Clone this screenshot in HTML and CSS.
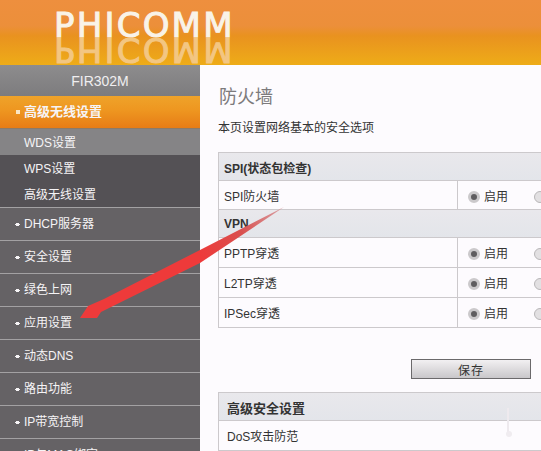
FILE: index.html
```html
<!DOCTYPE html>
<html>
<head>
    <title>PHICOMM FIR302M - 防火墙</title>
    <meta charset="UTF-8">
    <link rel="stylesheet" href="styles.css">
</head>
<body>
    <header class="header">
        <div class="logo">PHICOMM</div>
        <div class="logo logo-mirror" aria-hidden="true">PHICOMM</div>
    </header>

    <div class="main">
        <nav class="sidebar">
            <div class="model">FIR302M</div>
            <a class="menu active" href="#">高级无线设置</a>
            <div class="submenu">
                <a class="sub current" href="#">WDS设置</a>
                <a class="sub" href="#">WPS设置</a>
                <a class="sub" href="#">高级无线设置</a>
            </div>
            <a class="menu" href="#">DHCP服务器</a>
            <a class="menu" href="#">安全设置</a>
            <a class="menu" href="#">绿色上网</a>
            <a class="menu" href="#">应用设置</a>
            <a class="menu" href="#">动态DNS</a>
            <a class="menu" href="#">路由功能</a>
            <a class="menu" href="#">IP带宽控制</a>
            <a class="menu" href="#">IP与MAC绑定</a>
        </nav>

        <div class="content">
            <h2>防火墙</h2>
            <p class="intro">本页设置网络基本的安全选项</p>

            <table class="settings">
                <tr class="head"><th colspan="2">SPI(状态包检查)</th></tr>
                <tr class="short">
                    <td class="name">SPI防火墙</td>
                    <td class="opts"><span class="radio on"></span><span class="opt">启用</span><span class="radio"></span></td>
                </tr>
                <tr class="head"><th colspan="2">VPN</th></tr>
                <tr>
                    <td class="name">PPTP穿透</td>
                    <td class="opts"><span class="radio on"></span><span class="opt">启用</span><span class="radio"></span></td>
                </tr>
                <tr>
                    <td class="name">L2TP穿透</td>
                    <td class="opts"><span class="radio on"></span><span class="opt">启用</span><span class="radio"></span></td>
                </tr>
                <tr>
                    <td class="name">IPSec穿透</td>
                    <td class="opts"><span class="radio on"></span><span class="opt">启用</span><span class="radio"></span></td>
                </tr>
            </table>

            <div class="actions">
                <button class="save" type="button">保存</button>
            </div>

            <table class="settings">
                <tr class="head"><th class="big" colspan="2">高级安全设置</th></tr>
                <tr>
                    <td class="name dos" colspan="2">DoS攻击防范</td>
                </tr>
            </table>
        </div>
    </div>

    <!-- red arrow drawn over the screenshot -->
    <svg class="arrow" width="541" height="451" viewBox="0 0 541 451">
        <defs>
            <linearGradient id="arrowFade" x1="283" y1="208" x2="200" y2="255" gradientUnits="userSpaceOnUse">
                <stop offset="0" stop-color="#d9a0a4"/>
                <stop offset="0.5" stop-color="#d9504f"/>
                <stop offset="1" stop-color="#ee3a3a"/>
            </linearGradient>
        </defs>
        <path d="M284 207 L200 250 L104 299 L88 306 L80 318 L97 318 L101 312 L200 263 Z" fill="url(#arrowFade)"/>
        <path d="M508 408 L508 436" stroke="#eeeaee" stroke-width="2" fill="none"/>
        <circle cx="509" cy="434" r="3" fill="#f0ecf0"/>
    </svg>
</body>
</html>
```

FILE: styles.css
```css
/* CSS styles */
html, body {
    height: 100%;
}

body {
    margin: 0;
    overflow: hidden;
    position: relative;
    font-family: "Liberation Sans", "Noto Sans CJK SC", sans-serif;
    font-size: 12px;
    color: #333;
    background-color: #fdfbfe;
}

.header {
    position: relative;
    height: 65px;
    overflow: hidden;
    box-sizing: border-box;
    padding: 12px 0 0 54px;
    background: linear-gradient(#ee8f3e, #ec8f3a 40%, #e9921f 55%, #eeac18 100%);
}

.logo {
    font-family: "DejaVu Sans", sans-serif;
    font-size: 34px;
    line-height: 26px;
    letter-spacing: 2.2px;
    color: #f9f3e8;
    -webkit-text-stroke: 1px #f9f3e8;
}

.logo-mirror {
    position: absolute;
    left: 54px;
    top: 37px;
    color: #f3c682;
    -webkit-text-stroke: 1px #f3c682;
    transform: scaleY(-1);
}

.main {
    display: flex;
}

/* left menu */
.sidebar {
    width: 200px;
    flex-shrink: 0;
    background-color: #656265;
    color: #fff;
}

.sidebar a {
    display: block;
    color: #f6f4f6;
    text-decoration: none;
}

.model {
    height: 31px;
    line-height: 33px;
    text-align: center;
    font-size: 14px;
    color: #f0eef0;
    background: linear-gradient(#8d8c8d, #7d7c7e);
}

.menu {
    position: relative;
    height: 32px;
    line-height: 33px;
    padding-left: 24px;
    border-bottom: 1px solid #a3a1a3;
}

/* small plus in front of each item */
.menu::before {
    content: "";
    position: absolute;
    left: 15px;
    top: 14px;
    width: 5px;
    height: 5px;
    background:
        linear-gradient(#f6f4f6, #f6f4f6) center / 5px 1px no-repeat,
        linear-gradient(#f6f4f6, #f6f4f6) center / 3px 3px no-repeat;
}

.menu.active {
    line-height: 31px;
    font-size: 13px;
    font-weight: bold;
    background: linear-gradient(#efa32a, #ee9620 45%, #e77c16);
    border-bottom: 1px solid #8c7a68;
}

.menu.active::before {
    left: 16px;
    width: 4px;
    height: 4px;
    background: #fbe6c4;
}

.submenu {
    background-color: #545155;
    border-bottom: 1px solid #a3a1a3;
}

.sub {
    height: 26px;
    line-height: 29px;
    padding-left: 24px;
}

.sub.current {
    background-color: #858486;
}

/* right side */
.content {
    width: 345px;
    flex-shrink: 0;
    padding-left: 18px;
}

h2 {
    margin: 0;
    padding: 20px 0 0 1px;
    font-size: 18px;
    line-height: 24px;
    font-weight: normal;
    color: #7c7a7c;
}

.intro {
    margin: 10px 0 15px;
    line-height: 18px;
}

.settings {
    width: 100%;
    border-collapse: collapse;
    border: 1px solid #ccc9cc;
}

.settings td, .settings th {
    height: 30px;
    padding: 0 0 0 5px;
    box-sizing: border-box;
    border-top: 1px solid #ccc9cc;
    text-align: left;
}

.settings .short td {
    height: 29px;
}

.head {
    background: linear-gradient(#e9e8ec, #e3e5ea);
}

.settings .head th {
    height: 28px;
    padding-top: 1px;
    color: #333;
}

.settings .head .big {
    padding-left: 8px;
    font-size: 13px;
}

.name {
    width: 239px;
}

.settings .dos {
    padding-left: 8px;
}

.opts {
    border-left: 1px solid #ccc9cc;
    white-space: nowrap;
}

.radio {
    display: inline-block;
    width: 12px;
    height: 12px;
    margin-left: 5px;
    box-sizing: border-box;
    vertical-align: -2px;
    border-radius: 50%;
    border: 1px solid #b8b6b8;
    background-color: #e2e0e2;
}

.radio.on {
    border: 3px solid #cbc9cb;
    background-color: #5f5d60;
}

.opt {
    margin: 0 21px 0 4px;
}

.actions {
    padding: 31px 0 13px 193px;
}

.save {
    display: block;
    width: 120px;
    height: 20px;
    padding: 0;
    font: inherit;
    color: #333;
    letter-spacing: 1px;
    background: linear-gradient(#f2f0f2, #c9c7ca);
    border: 1px solid #6b696b;
}

.arrow {
    position: absolute;
    left: 0;
    top: 0;
    pointer-events: none;
}
```
